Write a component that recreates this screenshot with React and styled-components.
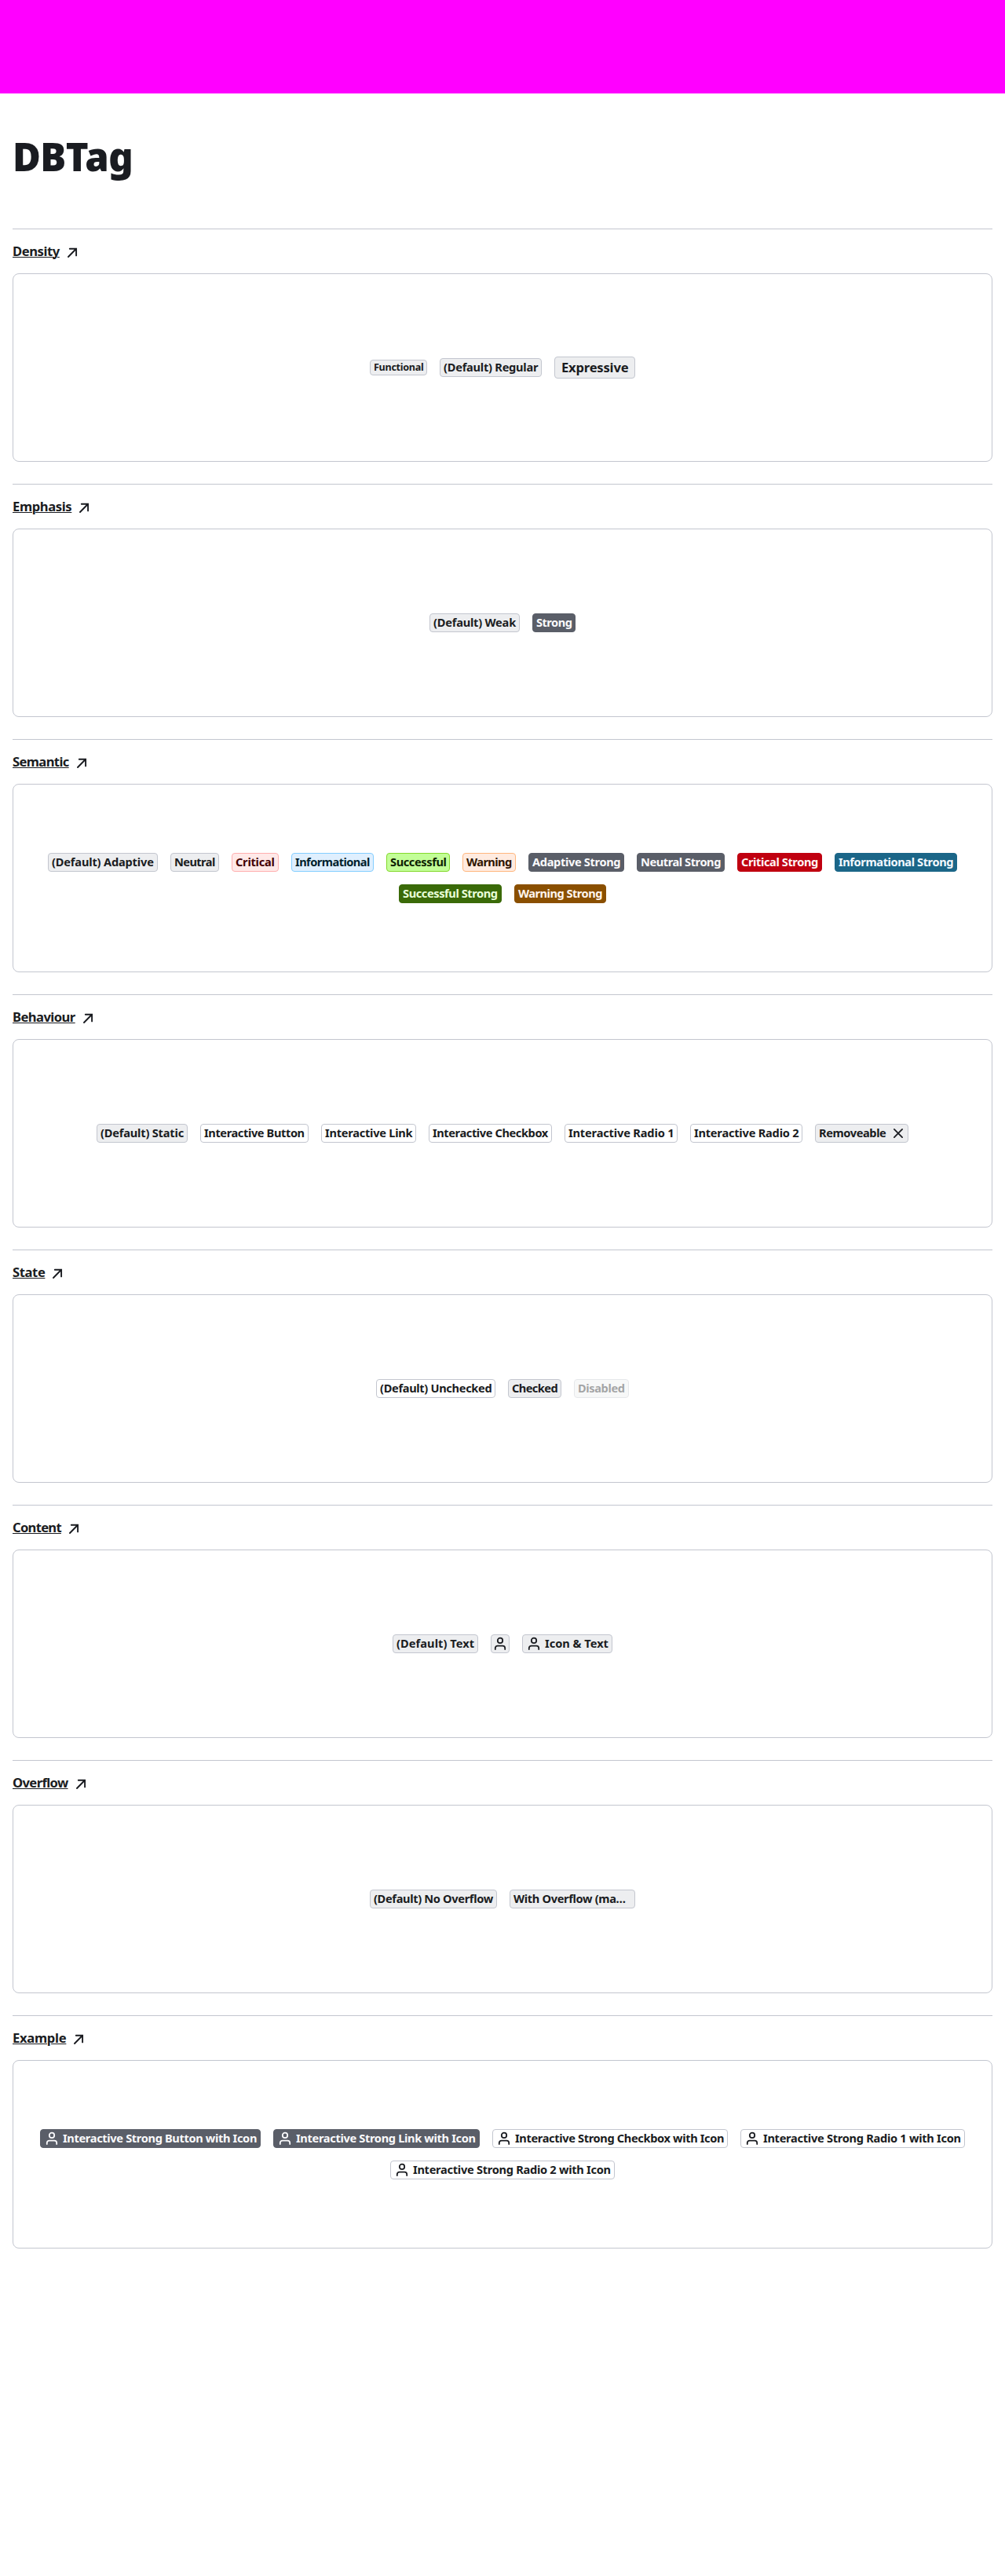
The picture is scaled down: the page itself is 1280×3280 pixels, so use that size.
import React, { useLayoutEffect, useRef, useState } from "react";
import styled, { createGlobalStyle, css } from "styled-components";

const GlobalStyle = createGlobalStyle`
  * { box-sizing: border-box; }
  body {
    margin: 0;
    background: #fff;
    color: #1a1c21;
    font-family: "Noto Sans", "Open Sans", sans-serif;
    -webkit-font-smoothing: antialiased;
  }
`;

const Page = styled.div`
  min-height: 3280px;
`;

const Banner = styled.div`
  height: 119px;
  background: #ff00ff;
`;

const Main = styled.main`
  padding: 0 16px;
`;

const Title = styled.h1`
  display: flex;
  align-items: center;
  height: 172px;
  margin: 0;
  padding: 0 0 12px 0;
  font-size: 49px;
  line-height: 60px;
  font-weight: 900;
`;

const Section = styled.section`
  border-top: 1px solid #c3c6cf;
  height: 325px;
`;

const SectionLink = styled.a`
  display: flex;
  align-items: center;
  gap: 8px;
  height: 56px;
  color: #1a1c21;
  font-size: 16.6px;
  line-height: 24px;
  font-weight: 700;
  text-decoration: underline;
  text-decoration-thickness: 1px;
  text-underline-offset: 1px;
`;

const Panel = styled.div`
  display: flex;
  flex-wrap: wrap;
  align-items: center;
  align-content: center;
  justify-content: center;
  gap: 16px;
  height: 240px;
  padding: 0 16px;
  border: 1px solid #c3c6cf;
  border-radius: 8px;
`;

const tones = {
  neutral: ["#edeef0", "#1a1c21", "#c3c6cf"],
  plain: ["#ffffff", "#1a1c21", "#c3c6cf"],
  critical: ["#ffe9e8", "#440004", "#ffafaf"],
  informational: ["#dfeffe", "#001e2c", "#84ceff"],
  successful: ["#c2fe97", "#0d2000", "#84d82c"],
  warning: ["#ffebe0", "#2e1500", "#ffb77e"],
  neutralStrong: ["#5a5e68", "#fafafc", "#5a5e68"],
  criticalStrong: ["#c00010", "#fff4f3", "#c00010"],
  informationalStrong: ["#1b6688", "#f3f9ff", "#1b6688"],
  successfulStrong: ["#3a6a08", "#e9ffda", "#3a6a08"],
  warningStrong: ["#8a4f00", "#fff5ef", "#8a4f00"],
};

const densities = {
  functional: css`height: 20px; padding: 0 4px; font-size: 12.6px;`,
  regular: css`height: 24px; padding: 0 4px; font-size: 14.6px;`,
  expressive: css`height: 28px; padding: 0 8px; font-size: 16.6px;`,
};

const TagBox = styled.div`
  display: flex;
  flex: none;
  align-items: center;
  gap: 4px;
  width: ${(p) => p.$width}px;
  ${(p) => densities[p.$density]}
  font-weight: 700;
  line-height: 16px;
  border: 1px solid ${(p) => tones[p.$tone][2]};
  border-radius: 4px;
  background: ${(p) => tones[p.$tone][0]};
  color: ${(p) => tones[p.$tone][1]};
  opacity: ${(p) => (p.$disabled ? 0.4 : 1)};
`;

const LabelSlot = styled.span`
  display: flex;
  flex: 1;
  min-width: 0;
  padding-bottom: ${(p) => (p.$density === "regular" ? 2 : 0)}px;
`;

const LabelText = styled.span`
  flex: none;
  white-space: pre;
`;

const IconSvg = styled.svg`
  flex: none;
  display: block;
  margin: ${(p) => p.$margin || 0};
`;

/* Tracks the letters out or in so that a label fills its slot. */
function FitLabel({ children, width }) {
  const ref = useRef(null);
  const [spacing, setSpacing] = useState(0);
  useLayoutEffect(() => {
    const text = ref.current;
    const target = width || text.parentElement.clientWidth;
    setSpacing((target - text.offsetWidth) / children.length);
  }, [children, width]);
  return (
    <LabelText ref={ref} style={{ letterSpacing: spacing }}>
      {children}
    </LabelText>
  );
}

const PersonIcon = ({ margin }) => (
  <IconSvg $margin={margin} width="20" height="20" viewBox="0 0 20 20" fill="none" stroke="currentColor" strokeWidth="1.8" strokeLinecap="round">
    <circle cx="10" cy="5.9" r="3.2" />
    <path d="M3.8 17v-1.4a3 3 0 0 1 3-3h6.4a3 3 0 0 1 3 3V17" />
  </IconSvg>
);

const CrossIcon = () => (
  <IconSvg $margin="0 0 0 4px" width="16" height="16" viewBox="0 0 16 16" fill="none" stroke="currentColor" strokeWidth="1.8" strokeLinecap="round">
    <path d="M2.9 2.9l10.2 10.2M13.1 2.9L2.9 13.1" />
  </IconSvg>
);

const ArrowIcon = () => (
  <IconSvg width="20" height="20" viewBox="0 0 20 20" fill="none" stroke="currentColor" strokeWidth="1.9" strokeLinecap="round">
    <path d="M4.8 6.7H13.1V15.4M12.8 7L3 17" />
  </IconSvg>
);

function Tag({ label, width, labelWidth, tone = "neutral", density = "regular", icon, removable, disabled }) {
  return (
    <TagBox $width={width} $tone={tone} $density={density} $disabled={disabled}>
      {icon && <PersonIcon margin={label ? "0 0.5px 0 -0.5px" : "0 0 0 -3px"} />}
      {label && (
        <LabelSlot $density={density}>
          <FitLabel width={labelWidth}>{label}</FitLabel>
        </LabelSlot>
      )}
      {removable && <CrossIcon />}
    </TagBox>
  );
}

const sections = [
  { name: "Density", width: 60, tags: [
    { label: "Functional", width: 73, density: "functional" },
    { label: "(Default) Regular", width: 130 },
    { label: "Expressive", width: 103, density: "expressive" },
  ] },
  { name: "Emphasis", width: 75, tags: [
    { label: "(Default) Weak", width: 115 },
    { label: "Strong", width: 55, tone: "neutralStrong" },
  ] },
  { name: "Semantic", width: 72, tags: [
    { label: "(Default) Adaptive", width: 140 },
    { label: "Neutral", width: 62 },
    { label: "Critical", width: 60, tone: "critical" },
    { label: "Informational", width: 105, tone: "informational" },
    { label: "Successful", width: 81, tone: "successful" },
    { label: "Warning", width: 68, tone: "warning" },
    { label: "Adaptive Strong", width: 122, tone: "neutralStrong" },
    { label: "Neutral Strong", width: 112, tone: "neutralStrong" },
    { label: "Critical Strong", width: 108, tone: "criticalStrong" },
    { label: "Informational Strong", width: 156, tone: "informationalStrong" },
    { label: "Successful Strong", width: 131, tone: "successfulStrong" },
    { label: "Warning Strong", width: 117, tone: "warningStrong" },
  ] },
  { name: "Behaviour", width: 80, tags: [
    { label: "(Default) Static", width: 116 },
    { label: "Interactive Button", width: 138, tone: "plain" },
    { label: "Interactive Link", width: 121, tone: "plain" },
    { label: "Interactive Checkbox", width: 157, tone: "plain" },
    { label: "Interactive Radio 1", width: 144, tone: "plain" },
    { label: "Interactive Radio 2", width: 143, tone: "plain" },
    { label: "Removeable", width: 119, removable: true },
  ] },
  { name: "State", width: 41, tags: [
    { label: "(Default) Unchecked", width: 152, tone: "plain" },
    { label: "Checked", width: 68 },
    { label: "Disabled", width: 70, disabled: true },
  ] },
  { name: "Content", width: 62, tags: [
    { label: "(Default) Text", width: 109 },
    { width: 24, icon: true },
    { label: "Icon & Text", width: 115, icon: true },
  ] },
  { name: "Overflow", width: 71, tags: [
    { label: "(Default) No Overflow", width: 162 },
    { label: "With Overflow (ma…", width: 160, labelWidth: 143 },
  ] },
  { name: "Example", width: 68, tags: [
    { label: "Interactive Strong Button with Icon", width: 281, tone: "neutralStrong", icon: true },
    { label: "Interactive Strong Link with Icon", width: 263, tone: "neutralStrong", icon: true },
    { label: "Interactive Strong Checkbox with Icon", width: 300, tone: "plain", icon: true },
    { label: "Interactive Strong Radio 1 with Icon", width: 286, tone: "plain", icon: true },
    { label: "Interactive Strong Radio 2 with Icon", width: 286, tone: "plain", icon: true },
  ] },
];

export default function App() {
  return (
    <Page>
      <GlobalStyle />
      <Banner />
      <Main>
        <Title>
          <FitLabel width={153}>DBTag</FitLabel>
        </Title>
        {sections.map((s) => (
          <Section key={s.name}>
            <SectionLink>
              <FitLabel width={s.width}>{s.name}</FitLabel>
              <ArrowIcon />
            </SectionLink>
            <Panel>
              {s.tags.map((t, i) => (
                <Tag key={i} {...t} />
              ))}
            </Panel>
          </Section>
        ))}
      </Main>
    </Page>
  );
}
